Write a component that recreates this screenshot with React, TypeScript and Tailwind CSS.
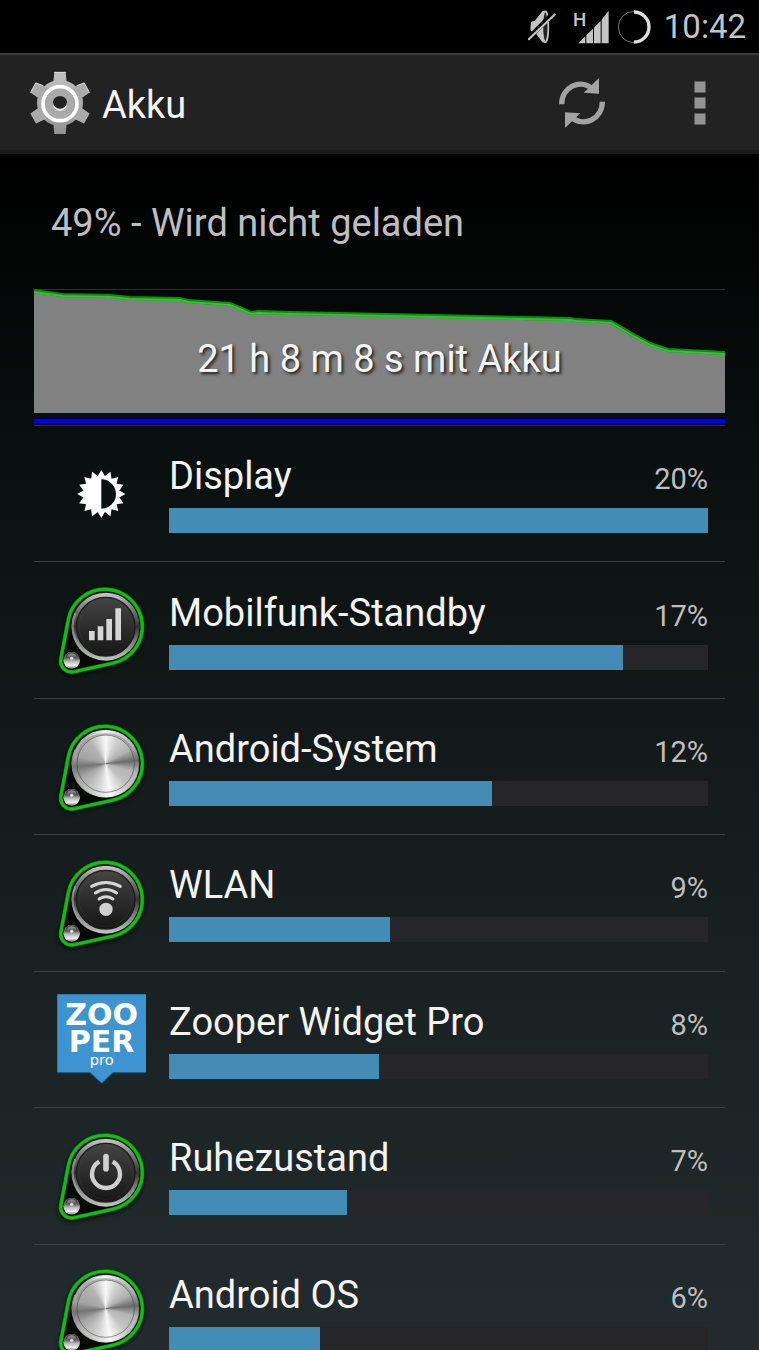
import type { ReactNode } from "react";

interface Consumer {
  name: string;
  percent: number;
  fill: number;
  icon: ReactNode;
}

const CONSUMERS: Consumer[] = [
  { name: "Display", percent: 20, fill: 100, icon: <DisplayIcon /> },
  { name: "Mobilfunk-Standby", percent: 17, fill: 84.2, icon: <KnobIcon><SignalGlyph /></KnobIcon> },
  { name: "Android-System", percent: 12, fill: 60, icon: <KnobIcon /> },
  { name: "WLAN", percent: 9, fill: 41, icon: <KnobIcon><WifiGlyph /></KnobIcon> },
  { name: "Zooper Widget Pro", percent: 8, fill: 39, icon: <ZooperIcon /> },
  { name: "Ruhezustand", percent: 7, fill: 33, icon: <KnobIcon><PowerGlyph /></KnobIcon> },
  { name: "Android OS", percent: 6, fill: 28, icon: <KnobIcon /> },
];

export default function App() {
  return (
    <div className="flex h-screen flex-col overflow-hidden bg-[linear-gradient(#000_12%,#0a100f_33%,#151b1c_58%,#222c2e_100%)] font-[Roboto,sans-serif] text-[#f3f3f3]">
      <StatusBar />
      <ActionBar />
      <main className="min-h-0 flex-1 overflow-y-auto px-[34px] [scrollbar-width:none]">
        <p className="flex h-[135px] items-center px-[17px] pt-[2px] text-[38px] leading-[44px] text-[#bebebe]">
          49% - Wird nicht geladen
        </p>
        <HistoryChart />
        <ul className="grid h-[955px] auto-rows-fr">
          {CONSUMERS.map((item) => (
            <ConsumerRow key={item.name} item={item} />
          ))}
        </ul>
      </main>
    </div>
  );
}

/* ============================================================
   Bars at the top
   ============================================================ */

function StatusBar() {
  return (
    <div className="flex h-[53px] shrink-0 items-center justify-end bg-black pr-[13px] text-[#c4c4c4]">
      <MutedIcon />
      <MobileSignalIcon />
      <BatteryRingIcon />
      <span className="ml-[13px] text-[33px] leading-[40px]">10:42</span>
    </div>
  );
}

function ActionBar() {
  return (
    <header className="flex h-[101px] shrink-0 items-center border-t-2 border-b-4 border-t-[#3c3c3c] border-b-[#1a1a18] bg-[#222222] pr-[35px] pl-[28px]">
      <GearIcon />
      <h1 className="ml-[10px] flex-1 pt-[4px] text-[38px] leading-[44px]">Akku</h1>
      <button type="button" aria-label="Aktualisieren" className="text-[#a3a3a3]">
        <RefreshIcon />
      </button>
      <button type="button" aria-label="Weitere Optionen" className="ml-[70px] flex w-[48px] justify-center">
        <svg width="12" height="44" viewBox="0 0 12 44" fill="#949494" aria-hidden="true">
          <path d="M0.500 0.500h11v11h-11zM0.500 16.500h11v11h-11zM0.500 32.500h11v11h-11z" />
        </svg>
      </button>
    </header>
  );
}

/* ============================================================
   Battery history
   ============================================================ */

const LEVEL =
  "M0 2L28 6L76 7L96 9L146 10L154 12L196 15L206 19L217 24L224 23L256 24L400 27L536 30L541 31L577 33L601 47L616 55L634 61L691 64";

function HistoryChart() {
  return (
    <div className="relative h-[137px]">
      <svg
        viewBox="0 0 691 137"
        preserveAspectRatio="none"
        className="h-full w-full"
        aria-hidden="true"
      >
        <path d="M0 0.500H691M0 136.500H691" stroke="#2b302f" />
        <path d={`${LEVEL}V124H0Z`} fill="#818181" />
        <path d={LEVEL} stroke="#0a8f0a" strokeWidth="4" fill="none" />
        <path d={LEVEL} stroke="#30c430" strokeWidth="2" fill="none" transform="translate(0 1)" />
        <path d="M0 132H691" stroke="#000058" strokeWidth="7" />
        <path d="M0 132H691" stroke="#0000e0" strokeWidth="4" />
      </svg>
      <p className="absolute inset-x-0 top-[48px] text-center text-[38px] leading-[44px] [text-shadow:2px_2px_3px_#222]">
        21 h 8 m 8 s mit Akku
      </p>
    </div>
  );
}

/* ============================================================
   Consumer list
   ============================================================ */

function ConsumerRow({ item }: { item: Consumer }) {
  return (
    <li className="flex items-center border-b border-[#3b4042] pr-[17px] pl-[23px]">
      {item.icon}
      <div className="ml-[22px] flex-1">
        <div className="flex items-baseline justify-between">
          <h2 className="text-[38px] leading-[44px]">{item.name}</h2>
          <span className="text-[29px] leading-[44px] text-[#bebebe]">{item.percent}%</span>
        </div>
        <div
          role="progressbar"
          aria-label={item.name}
          aria-valuenow={item.percent}
          className="mt-[7px] h-[25px] bg-[#26262a]"
        >
          <div className="h-full bg-[#438cb6]" style={{ width: `${item.fill}%` }} />
        </div>
      </div>
    </li>
  );
}

/* ============================================================
   Row icons
   ============================================================ */

function DisplayIcon() {
  const spikes = Array.from({ length: 32 }, (_, i) => {
    const r = i % 2 === 0 ? 72 : 55;
    const a = (i * Math.PI) / 16;
    return `${(184 + r * Math.sin(a)).toFixed(1)},${(165 - r * Math.cos(a)).toFixed(1)}`;
  }).join(" ");
  return (
    <svg width="90" height="90" viewBox="51 30 270 270" className="shrink-0" aria-hidden="true">
      <polygon points={spikes} fill="#fff" />
      <path d="M184 121a44 44 0 0 1 0 88z" fill="#0b1111" />
    </svg>
  );
}

const TEARDROP =
  "M85 134A112 112 0 1 1 219.200 264.300L102.100 290.200A33 33 0 0 1 62.600 251.800Z";

// Round metal knob in a green outline, with either a dark face or a brushed one
function KnobIcon({ children }: { children?: ReactNode }) {
  return (
    <svg width="90" height="90" viewBox="51 30 270 270" className="shrink-0 overflow-visible" aria-hidden="true">
      <defs>
        <linearGradient id="knob-rim" x1="0" y1="0" x2="0" y2="1">
          <stop offset="0" stopColor="#c9c9c9" />
          <stop offset="0.250" stopColor="#777" />
          <stop offset="0.500" stopColor="#333" />
          <stop offset="0.700" stopColor="#777" />
          <stop offset="1" stopColor="#c4c4c4" />
        </linearGradient>
        <linearGradient id="knob-face" x1="0" y1="0" x2="0" y2="1">
          <stop offset="0" stopColor="#444" />
          <stop offset="0.600" stopColor="#282828" />
          <stop offset="1" stopColor="#161616" />
        </linearGradient>
        <linearGradient id="knob-bead" x1="0" y1="0" x2="0" y2="1">
          <stop offset="0" stopColor="#aaa" />
          <stop offset="0.350" stopColor="#555" />
          <stop offset="0.550" stopColor="#b5b5b5" />
          <stop offset="0.800" stopColor="#eee" />
          <stop offset="1" stopColor="#777" />
        </linearGradient>
        <filter id="knob-shadow" x="-20%" y="-20%" width="140%" height="140%">
          <feGaussianBlur stdDeviation="7" />
        </filter>
      </defs>
      <path d={TEARDROP} fill="#000" stroke="#000" strokeWidth="12" opacity="0.700" transform="translate(0 6)" filter="url(#knob-shadow)" />
      <path d={TEARDROP} fill="#070907" stroke="#0b8a0b" strokeWidth="12" />
      <path d={TEARDROP} fill="none" stroke="#12c012" strokeWidth="8" />
      <circle cx="197" cy="155" r="102" fill="url(#knob-rim)" />
      <path d="M106 115A100 100 0 0 0 155 245" stroke="#b0b0b0" strokeWidth="7" fill="none" opacity="0.600" />
      {children ? (
        <>
          <circle cx="197" cy="155" r="88" fill="url(#knob-face)" stroke="#1c1c1c" strokeWidth="4" />
          <circle cx="197" cy="155" r="80" fill="none" stroke="#555" strokeWidth="1" opacity="0.500" />
          {children}
        </>
      ) : (
        <>
          <foreignObject x="97" y="55" width="200" height="200">
            <div className="h-full w-full rounded-full bg-[conic-gradient(#f8f8f8_0deg,#d0d0d0_25deg,#b0b0b0_60deg,#6c6c6c_84deg,#b4b4b4_105deg,#c2c2c2_135deg,#f8f8f8_172deg,#d0d0d0_200deg,#a6a6a6_240deg,#747474_264deg,#a4a4a4_285deg,#b4b4b4_325deg,#f8f8f8_360deg)]" />
          </foreignObject>
          <circle cx="197" cy="155" r="86" fill="none" stroke="#444" strokeWidth="3" opacity="0.600" />
          <path d="M110 130A91 91 0 0 1 284 130" stroke="#888" strokeWidth="6" fill="none" opacity="0.500" />
        </>
      )}
      <circle cx="95" cy="256" r="25" fill="url(#knob-bead)" />
      <path d="M78 245a18 18 0 0 1 34 0" stroke="#444" strokeWidth="4" fill="none" />
      <circle cx="95" cy="250" r="5" fill="#ddd" />
    </svg>
  );
}

function SignalGlyph() {
  return <path d="M147 168h17v28h-17zM173 154h17v42h-17zM199 132h17v64h-17zM226 100h17v96h-17z" fill="#d6d6d6" />;
}

function WifiGlyph() {
  return (
    <g fill="none" stroke="#d6d6d6" strokeWidth="9" strokeLinecap="round">
      <circle cx="198" cy="184" r="20" fill="#d0d0d0" stroke="none" />
      <path d="M155 115Q198 92 241 115" />
      <path d="M166 135Q198 114 230 135" />
      <path d="M177 153Q198 140 219 153" />
    </g>
  );
}

function PowerGlyph() {
  return (
    <g fill="none" stroke="#d0d0d0">
      <path d="M178 122A42 42 0 1 0 218 122" strokeWidth="13" />
      <path d="M198 107V143" strokeWidth="17" strokeLinecap="round" />
    </g>
  );
}

function ZooperIcon() {
  return (
    <svg width="90" height="90" viewBox="51 30 270 270" className="shrink-0" aria-hidden="true">
      <path d="M52 35H318V268H219L185 299L150 268H52Z" fill="#1d5c86" />
      <path d="M52 31H318V264H219L185 296L150 264H52Z" fill="#3d94d0" />
      <g fill="#fff" textAnchor="middle" className="font-['DejaVu_Sans',sans-serif]">
        <text x="185" y="122" fontSize="90" className="font-bold">ZOO</text>
        <text x="185" y="203" fontSize="90" className="font-bold">PER</text>
        <text x="185" y="242" fontSize="44">pro</text>
      </g>
    </svg>
  );
}

/* ============================================================
   Status and action icons
   ============================================================ */

function MutedIcon() {
  return (
    <svg width="28" height="34" viewBox="0 0 84 102" className="mr-[17px]" aria-hidden="true">
      <path d="M9 36Q13 33 20 33L43 4Q47 1 53 3V98Q46 100 41 94L23 70Q10 70 7 58Z" fill="#c4c4c4" />
      <ellipse cx="52" cy="50" rx="9" ry="46" fill="#222" stroke="#c4c4c4" strokeWidth="5" />
      <path d="M0 86L76 10" stroke="#000" strokeWidth="15" />
      <path d="M1 89L82 12" stroke="#c4c4c4" strokeWidth="6" />
    </svg>
  );
}

function MobileSignalIcon() {
  return (
    <svg width="36" height="36" viewBox="0 0 108 108" className="mr-[8px]" fill="#c4c4c4" aria-hidden="true">
      <text x="0" y="51" fontSize="56" className="font-[Roboto,sans-serif] font-medium">H</text>
      <path d="M16 103L37 82V103ZM40 79L60 59V103H40ZM63 56L83 36V103H63ZM86 32L107 5V103H86Z" />
    </svg>
  );
}

function BatteryRingIcon() {
  return (
    <svg width="34" height="34" viewBox="0 0 102 102" fill="none" aria-hidden="true">
      <circle cx="51" cy="51" r="47" stroke="#777" strokeWidth="3" />
      <path d="M51 6A45 45 0 0 1 51 96" stroke="#e0e0e0" strokeWidth="10" />
    </svg>
  );
}

function RefreshIcon() {
  return (
    <svg width="48" height="52" viewBox="0 0 144 156" fill="none" aria-hidden="true">
      <path d="M11 82C11 30 66 4 103 35" stroke="currentColor" strokeWidth="16" />
      <path d="M123 3V50L77 47Z" fill="currentColor" />
      <g transform="rotate(180 72 78)">
        <path d="M11 82C11 30 66 4 103 35" stroke="currentColor" strokeWidth="16" />
        <path d="M123 3V50L77 47Z" fill="currentColor" />
      </g>
    </svg>
  );
}

function GearIcon() {
  return (
    <svg width="64" height="64" viewBox="0 0 192 192" aria-hidden="true">
      <defs>
        <linearGradient id="gear-fill" gradientUnits="userSpaceOnUse" x1="0" y1="0" x2="0" y2="192">
          <stop offset="0" stopColor="#c2c2c2" />
          <stop offset="1" stopColor="#929292" />
        </linearGradient>
      </defs>
      <g fill="url(#gear-fill)">
        <circle cx="96" cy="96" r="69" />
        <path d="M79 3H113L117 45H75ZM75 147H117L113 189H79Z" />
      </g>
      <g fill="#aaa">
        <path d="M79 3H113L117 45H75ZM75 147H117L113 189H79Z" transform="rotate(60 96 96)" />
        <path d="M79 3H113L117 45H75ZM75 147H117L113 189H79Z" transform="rotate(120 96 96)" />
      </g>
      <path d="M79 4H113M8 65L23 36L46 44M184 65L169 36L146 44" stroke="#ddd" strokeWidth="3" fill="none" />
      <circle cx="96" cy="98" r="51" fill="#aaa" stroke="#fff" strokeWidth="11" />
      <ellipse cx="96" cy="98" rx="21" ry="22" fill="#f5f5f5" />
      <ellipse cx="96" cy="94" rx="21" ry="19" fill="#222" />
    </svg>
  );
}
